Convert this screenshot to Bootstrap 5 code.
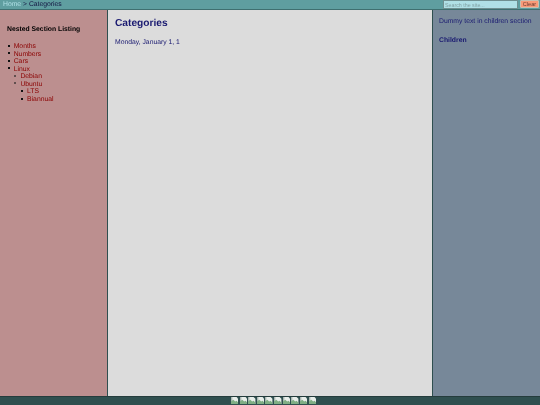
<!DOCTYPE html>
<html lang="en">
<head>
<meta charset="utf-8">
<title>Categories</title>
<link rel="stylesheet" href="https://cdn.jsdelivr.net/npm/bootstrap@5.3.0/dist/css/bootstrap.min.css">
<style>
html,body{height:100%;margin:0}
body{font-family:"Liberation Sans",Arial,sans-serif;font-size:6.8px;line-height:8px;color:#191970;background:#2f4f4f;text-rendering:geometricPrecision}
.shell{height:405px;width:540px;overflow:hidden;filter:blur(.38px)}
.topbar{height:10px;background:#5f9ea0;border-bottom:1px solid #3f6f70;color:#12123f;padding-left:3px}
.topbar a{color:#b0e0e6;text-decoration:none}
.crumbs{line-height:8px;font-size:6.8px;padding-top:.5px}
.searchbox{width:75px;height:9px;background:#b0e0e6;border:1px solid #6f8f90;border-radius:0;font-size:5.3px;line-height:7px;padding:0 1px;color:#7a9a9c}
.searchbox::placeholder{color:#7f9fa2;opacity:1}
.clearbtn{width:19px;height:8px;margin:0 1px 0 2px;padding:0;background:#fa9a78;border:1px solid #c9c0b0;border-radius:1px;font-size:5.6px;line-height:6px;color:#6a3a30}
.leftcol{width:108px;background:#bc8f8f;border-right:1px solid #2f4f4f;padding:15px 6px 0 7px}
.midcol{background:#dcdcdc;padding:7px 7px 0 7px;min-width:0}
.rightcol{width:108px;background:#778899;border-left:1px solid #2f4f4f;padding:8px 0 0 6px}
.lefttitle{font-size:6.8px;line-height:9px;font-weight:700;color:#000;margin:0 0 9px}
.tree{list-style:none;margin:0;padding:0 0 0 6.7px;font-size:6.8px;line-height:7.55px}
.tree li::before{content:"";display:inline-block;width:2px;height:2px;margin-left:-6.2px;margin-right:4.2px;vertical-align:1.3px;background:#111}
.tree .tree>li::before{background:transparent;border:.5px solid #222;border-radius:50%}
.tree .tree .tree>li::before{background:#111;border:0;border-radius:0}
.tree a{color:#8b0000;text-decoration:none}
.pagetitle{font-size:10.2px;line-height:13px;font-weight:700;color:#191970;margin:0 0 9px}
.dateline{font-size:6.8px;line-height:8px;margin:0}
.sidenote{font-size:6.8px;line-height:8px;margin:0 0 10.5px}
.sidehead{font-size:6.8px;line-height:8px;font-weight:700;margin:0}
.footbar{height:9px;background:#2f4f4f;border-top:1px solid #243c3c;padding-left:7px}
.footbar svg{display:block;width:7.4px;height:7.4px}
.footicons{gap:1.27px}
</style>
</head>
<body>
<div class="shell d-flex flex-column">
  <header class="topbar d-flex justify-content-between align-items-start flex-shrink-0">
    <div class="crumbs"><a href="#">Home</a> &gt; Categories</div>
    <form class="d-flex m-0">
      <input class="searchbox" type="text" placeholder="Search the site...">
      <button class="clearbtn" type="button">Clear</button>
    </form>
  </header>
  <div class="d-flex flex-grow-1" style="min-height:0">
    <aside class="leftcol flex-shrink-0">
      <h2 class="lefttitle">Nested Section Listing</h2>
      <ul class="tree">
        <li><a href="#">Months</a></li>
        <li><a href="#">Numbers</a></li>
        <li><a href="#">Cars</a></li>
        <li><a href="#">Linux</a>
          <ul class="tree">
            <li><a href="#">Debian</a></li>
            <li><a href="#">Ubuntu</a>
              <ul class="tree">
                <li><a href="#">LTS</a></li>
                <li><a href="#">Biannual</a></li>
              </ul>
            </li>
          </ul>
        </li>
      </ul>
    </aside>
    <main class="midcol flex-grow-1">
      <h1 class="pagetitle">Categories</h1>
      <p class="dateline">Monday, January 1, 1</p>
    </main>
    <aside class="rightcol flex-shrink-0">
      <p class="sidenote">Dummy text in children section</p>
      <h3 class="sidehead">Children</h3>
    </aside>
  </div>
  <footer class="footbar d-flex justify-content-center align-items-start flex-shrink-0">
    <div class="footicons d-flex">
      <svg viewBox="0 0 8 8"><path d="M0 0h6l2 2v6H0z" fill="#e8eeea"/><path d="M0 0h1.5v8H0z" fill="#aab6b2"/><path d="M0 8V5l2.5-2 2 2 1.5-1 2 2v2z" fill="#7fae84"/></svg>
      <svg viewBox="0 0 8 8"><path d="M0 0h6l2 2v6H0z" fill="#e8eeea"/><path d="M0 0h1.5v8H0z" fill="#aab6b2"/><path d="M0 8V5l2.5-2 2 2 1.5-1 2 2v2z" fill="#7fae84"/></svg>
      <svg viewBox="0 0 8 8"><path d="M0 0h6l2 2v6H0z" fill="#e8eeea"/><path d="M0 0h1.5v8H0z" fill="#aab6b2"/><path d="M0 8V5l2.5-2 2 2 1.5-1 2 2v2z" fill="#7fae84"/></svg>
      <svg viewBox="0 0 8 8"><path d="M0 0h6l2 2v6H0z" fill="#e8eeea"/><path d="M0 0h1.5v8H0z" fill="#aab6b2"/><path d="M0 8V5l2.5-2 2 2 1.5-1 2 2v2z" fill="#7fae84"/></svg>
      <svg viewBox="0 0 8 8"><path d="M0 0h6l2 2v6H0z" fill="#e8eeea"/><path d="M0 0h1.5v8H0z" fill="#aab6b2"/><path d="M0 8V5l2.5-2 2 2 1.5-1 2 2v2z" fill="#7fae84"/></svg>
      <svg viewBox="0 0 8 8"><path d="M0 0h6l2 2v6H0z" fill="#e8eeea"/><path d="M0 0h1.5v8H0z" fill="#aab6b2"/><path d="M0 8V5l2.5-2 2 2 1.5-1 2 2v2z" fill="#7fae84"/></svg>
      <svg viewBox="0 0 8 8"><path d="M0 0h6l2 2v6H0z" fill="#e8eeea"/><path d="M0 0h1.5v8H0z" fill="#aab6b2"/><path d="M0 8V5l2.5-2 2 2 1.5-1 2 2v2z" fill="#7fae84"/></svg>
      <svg viewBox="0 0 8 8"><path d="M0 0h6l2 2v6H0z" fill="#e8eeea"/><path d="M0 0h1.5v8H0z" fill="#aab6b2"/><path d="M0 8V5l2.5-2 2 2 1.5-1 2 2v2z" fill="#7fae84"/></svg>
      <svg viewBox="0 0 8 8"><path d="M0 0h6l2 2v6H0z" fill="#e8eeea"/><path d="M0 0h1.5v8H0z" fill="#aab6b2"/><path d="M0 8V5l2.5-2 2 2 1.5-1 2 2v2z" fill="#7fae84"/></svg>
      <svg viewBox="0 0 8 8"><path d="M0 0h6l2 2v6H0z" fill="#e8eeea"/><path d="M0 0h1.5v8H0z" fill="#aab6b2"/><path d="M0 8V5l2.5-2 2 2 1.5-1 2 2v2z" fill="#7fae84"/></svg>
    </div>
  </footer>
</div>
<script src="https://cdn.jsdelivr.net/npm/bootstrap@5.3.0/dist/js/bootstrap.bundle.min.js"></script>
</body>
</html>
